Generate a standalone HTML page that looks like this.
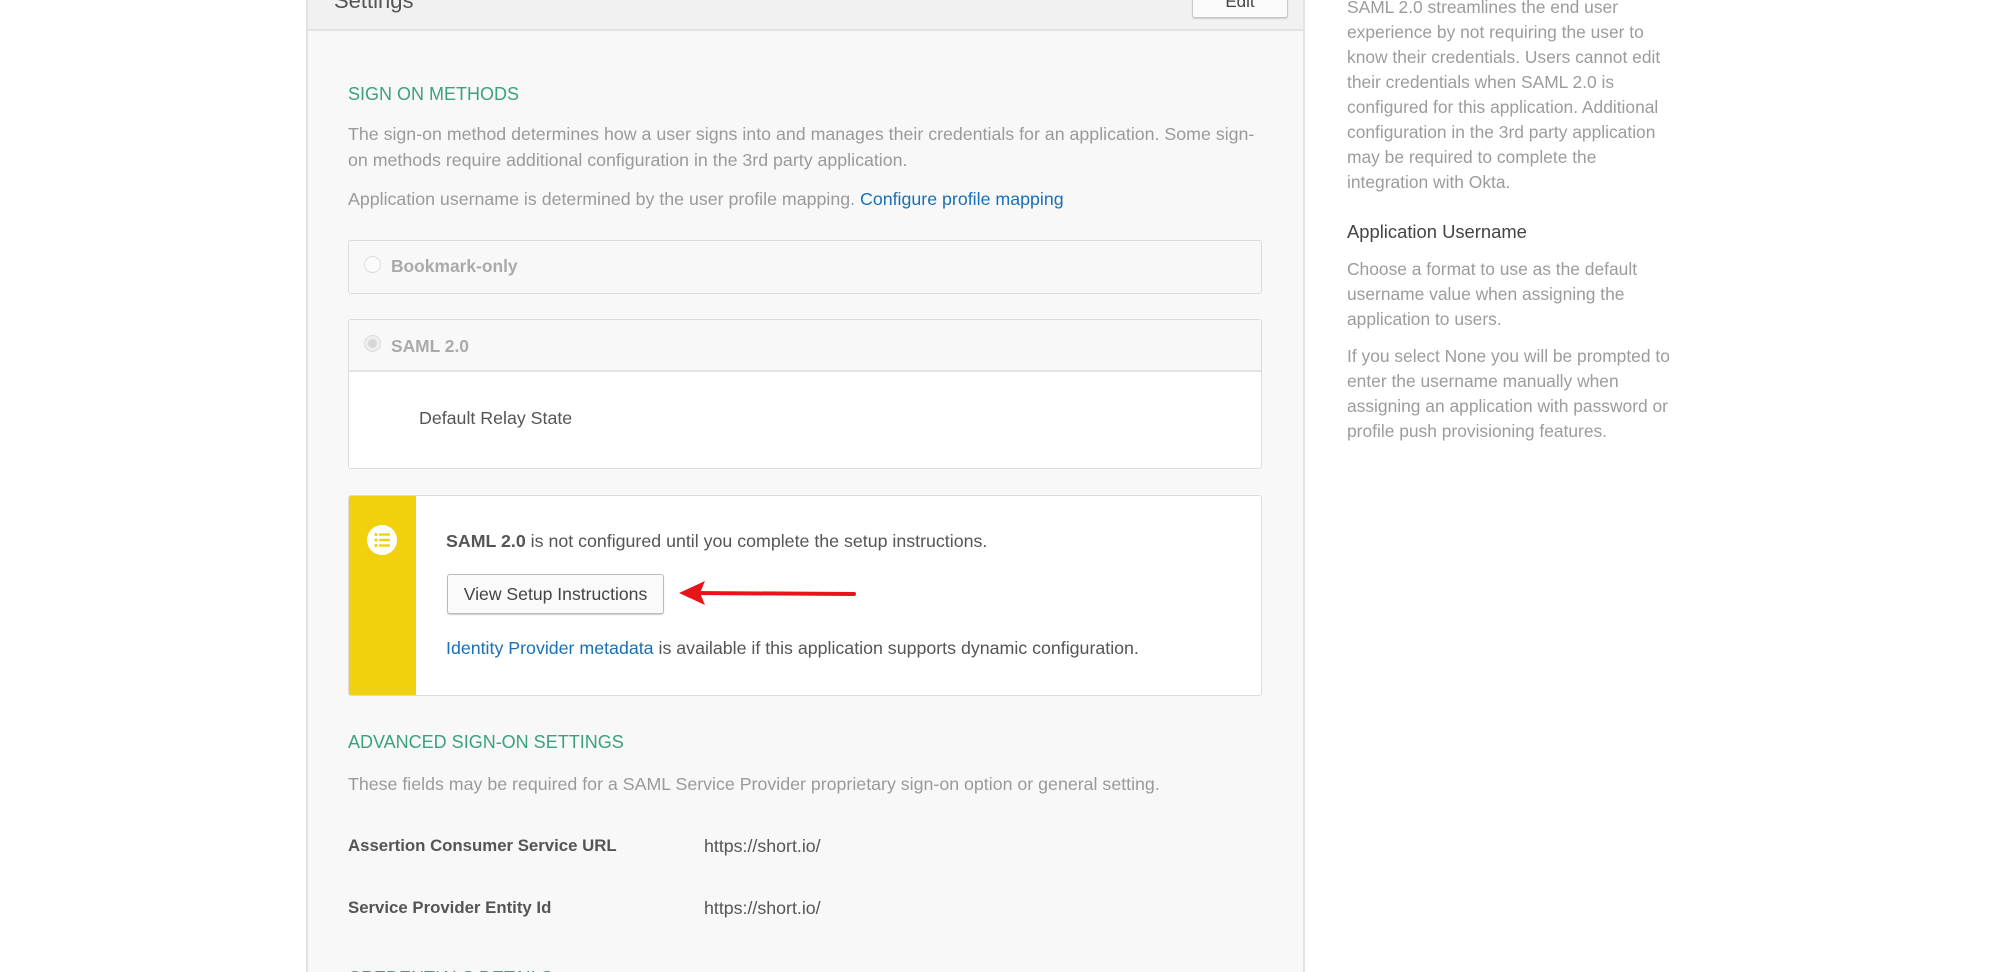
<!DOCTYPE html>
<html><head><style>
*{margin:0;padding:0;box-sizing:border-box}
html,body{width:2000px;height:972px;overflow:hidden}
body{background:#fff;position:relative;font-family:"Liberation Sans",sans-serif;}
.a{position:absolute;white-space:nowrap}
.panel{position:absolute;left:306px;top:0;width:999px;height:972px;background:#f8f8f8;border-left:2px solid #e3e3e3;border-right:2px solid #e3e3e3}
.hdr{position:absolute;left:306px;top:0;width:999px;height:31px;background:#f1f1f1;border:2px solid #e3e3e3;border-top:none}
.g{color:#3aa27d;font-size:18px}
.p{color:#9a9a9a;font-size:17.8px}
.d{color:#555;font-size:17.8px}
.b{color:#1a6fb5}
.box{position:absolute;background:#f8f8f8;border:1px solid #dcdcdc;border-radius:3px}
.r{position:absolute;left:1347px;color:#9c9c9c;font-size:17.4px;white-space:nowrap}
</style></head><body>
<div class="panel"></div>
<div class="hdr"></div>
<div class="a" style="left:334px;top:-12px;font-size:22px;color:#555">Settings</div>
<div class="a" style="left:1192px;top:-10px;width:96px;height:28px;background:#fafafa;border:1px solid #c8c8c8;border-radius:3px;box-shadow:0 1px 1px #ccc;text-align:center;font-size:17px;color:#444;line-height:22px">Edit</div>

<div class="a g" style="left:348px;top:84px">SIGN ON METHODS</div>
<div class="a p" style="left:348px;top:124px">The sign-on method determines how a user signs into and manages their credentials for an application. Some sign-</div>
<div class="a p" style="left:348px;top:150px">on methods require additional configuration in the 3rd party application.</div>
<div class="a p" style="left:348px;top:189px">Application username is determined by the user profile mapping. <span class="b">Configure profile mapping</span></div>

<div class="box" style="left:348px;top:240px;width:914px;height:54px"></div>
<div class="a" style="left:364px;top:256px;width:17px;height:17px;border-radius:50%;border:1px solid #ddd;background:#fbfbfb"></div>
<div class="a" style="left:391px;top:256px;font-size:17.4px;color:#aaa;font-weight:bold">Bookmark-only</div>

<div class="box" style="left:348px;top:319px;width:914px;height:150px;background:#fff"></div>
<div class="a" style="left:349px;top:320px;width:912px;height:52px;background:#f8f8f8;border-bottom:2px solid #e3e3e3"></div>
<div class="a" style="left:364px;top:335px;width:17px;height:17px;border-radius:50%;border:1px solid #ddd;background:#eee"><div style="margin:3px;width:9px;height:9px;border-radius:50%;background:#d6d6d6"></div></div>
<div class="a" style="left:391px;top:336px;font-size:17.4px;color:#aaa;font-weight:bold">SAML 2.0</div>
<div class="a d" style="left:419px;top:408px">Default Relay State</div>

<div class="box" style="left:348px;top:495px;width:914px;height:201px;background:#fff;overflow:hidden"><div style="position:absolute;left:0;top:0;width:67px;height:201px;background:#f1d10e"></div></div>
<div class="a" style="left:367px;top:525px;width:30px;height:30px;border-radius:50%;background:#fff">
<svg width="30" height="30"><g fill="#f1d10e"><circle cx="9" cy="9.5" r="1.6"/><circle cx="9" cy="15" r="1.6"/><circle cx="9" cy="20.5" r="1.6"/><rect x="12" y="8.3" width="11" height="2.4"/><rect x="12" y="13.8" width="11" height="2.4"/><rect x="12" y="19.3" width="11" height="2.4"/></g></svg></div>
<div class="a d" style="left:446px;top:531px"><b>SAML 2.0</b> is not configured until you complete the setup instructions.</div>
<div class="a" style="left:447px;top:574px;width:217px;height:40px;background:#fafafa;border:1px solid #bbb;border-radius:3px;box-shadow:0 1px 1px #ccc;text-align:center;line-height:38px;font-size:17.6px;color:#444">View Setup Instructions</div>
<svg class="a" style="left:676px;top:578px" width="182" height="30"><path d="M16 15 L178 16" stroke="#e8141a" stroke-width="4" stroke-linecap="round"/><path d="M3 15 L29 3 L24 15 L29 27 Z" fill="#e8141a"/></svg>
<div class="a d" style="left:446px;top:638px"><span class="b">Identity Provider metadata</span> is available if this application supports dynamic configuration.</div>

<div class="a g" style="left:348px;top:732px">ADVANCED SIGN-ON SETTINGS</div>
<div class="a p" style="left:348px;top:774px">These fields may be required for a SAML Service Provider proprietary sign-on option or general setting.</div>
<div class="a" style="left:348px;top:836px;font-size:16.8px;color:#555;font-weight:bold">Assertion Consumer Service URL</div>
<div class="a d" style="left:704px;top:836px">https://short.io/</div>
<div class="a" style="left:348px;top:898px;font-size:16.8px;color:#555;font-weight:bold">Service Provider Entity Id</div>
<div class="a d" style="left:704px;top:898px">https://short.io/</div>
<div class="a g" style="left:348px;top:968px">CREDENTIALS DETAILS</div>

<div class="r" style="top:-3px">SAML 2.0 streamlines the end user</div>
<div class="r" style="top:22px">experience by not requiring the user to</div>
<div class="r" style="top:47px">know their credentials. Users cannot edit</div>
<div class="r" style="top:72px">their credentials when SAML 2.0 is</div>
<div class="r" style="top:97px">configured for this application. Additional</div>
<div class="r" style="top:122px">configuration in the 3rd party application</div>
<div class="r" style="top:147px">may be required to complete the</div>
<div class="r" style="top:172px">integration with Okta.</div>
<div class="r" style="top:221px;color:#444;font-size:18.4px">Application Username</div>
<div class="r" style="top:259px">Choose a format to use as the default</div>
<div class="r" style="top:284px">username value when assigning the</div>
<div class="r" style="top:309px">application to users.</div>
<div class="r" style="top:346px">If you select None you will be prompted to</div>
<div class="r" style="top:371px">enter the username manually when</div>
<div class="r" style="top:396px">assigning an application with password or</div>
<div class="r" style="top:421px">profile push provisioning features.</div>
</body></html>
